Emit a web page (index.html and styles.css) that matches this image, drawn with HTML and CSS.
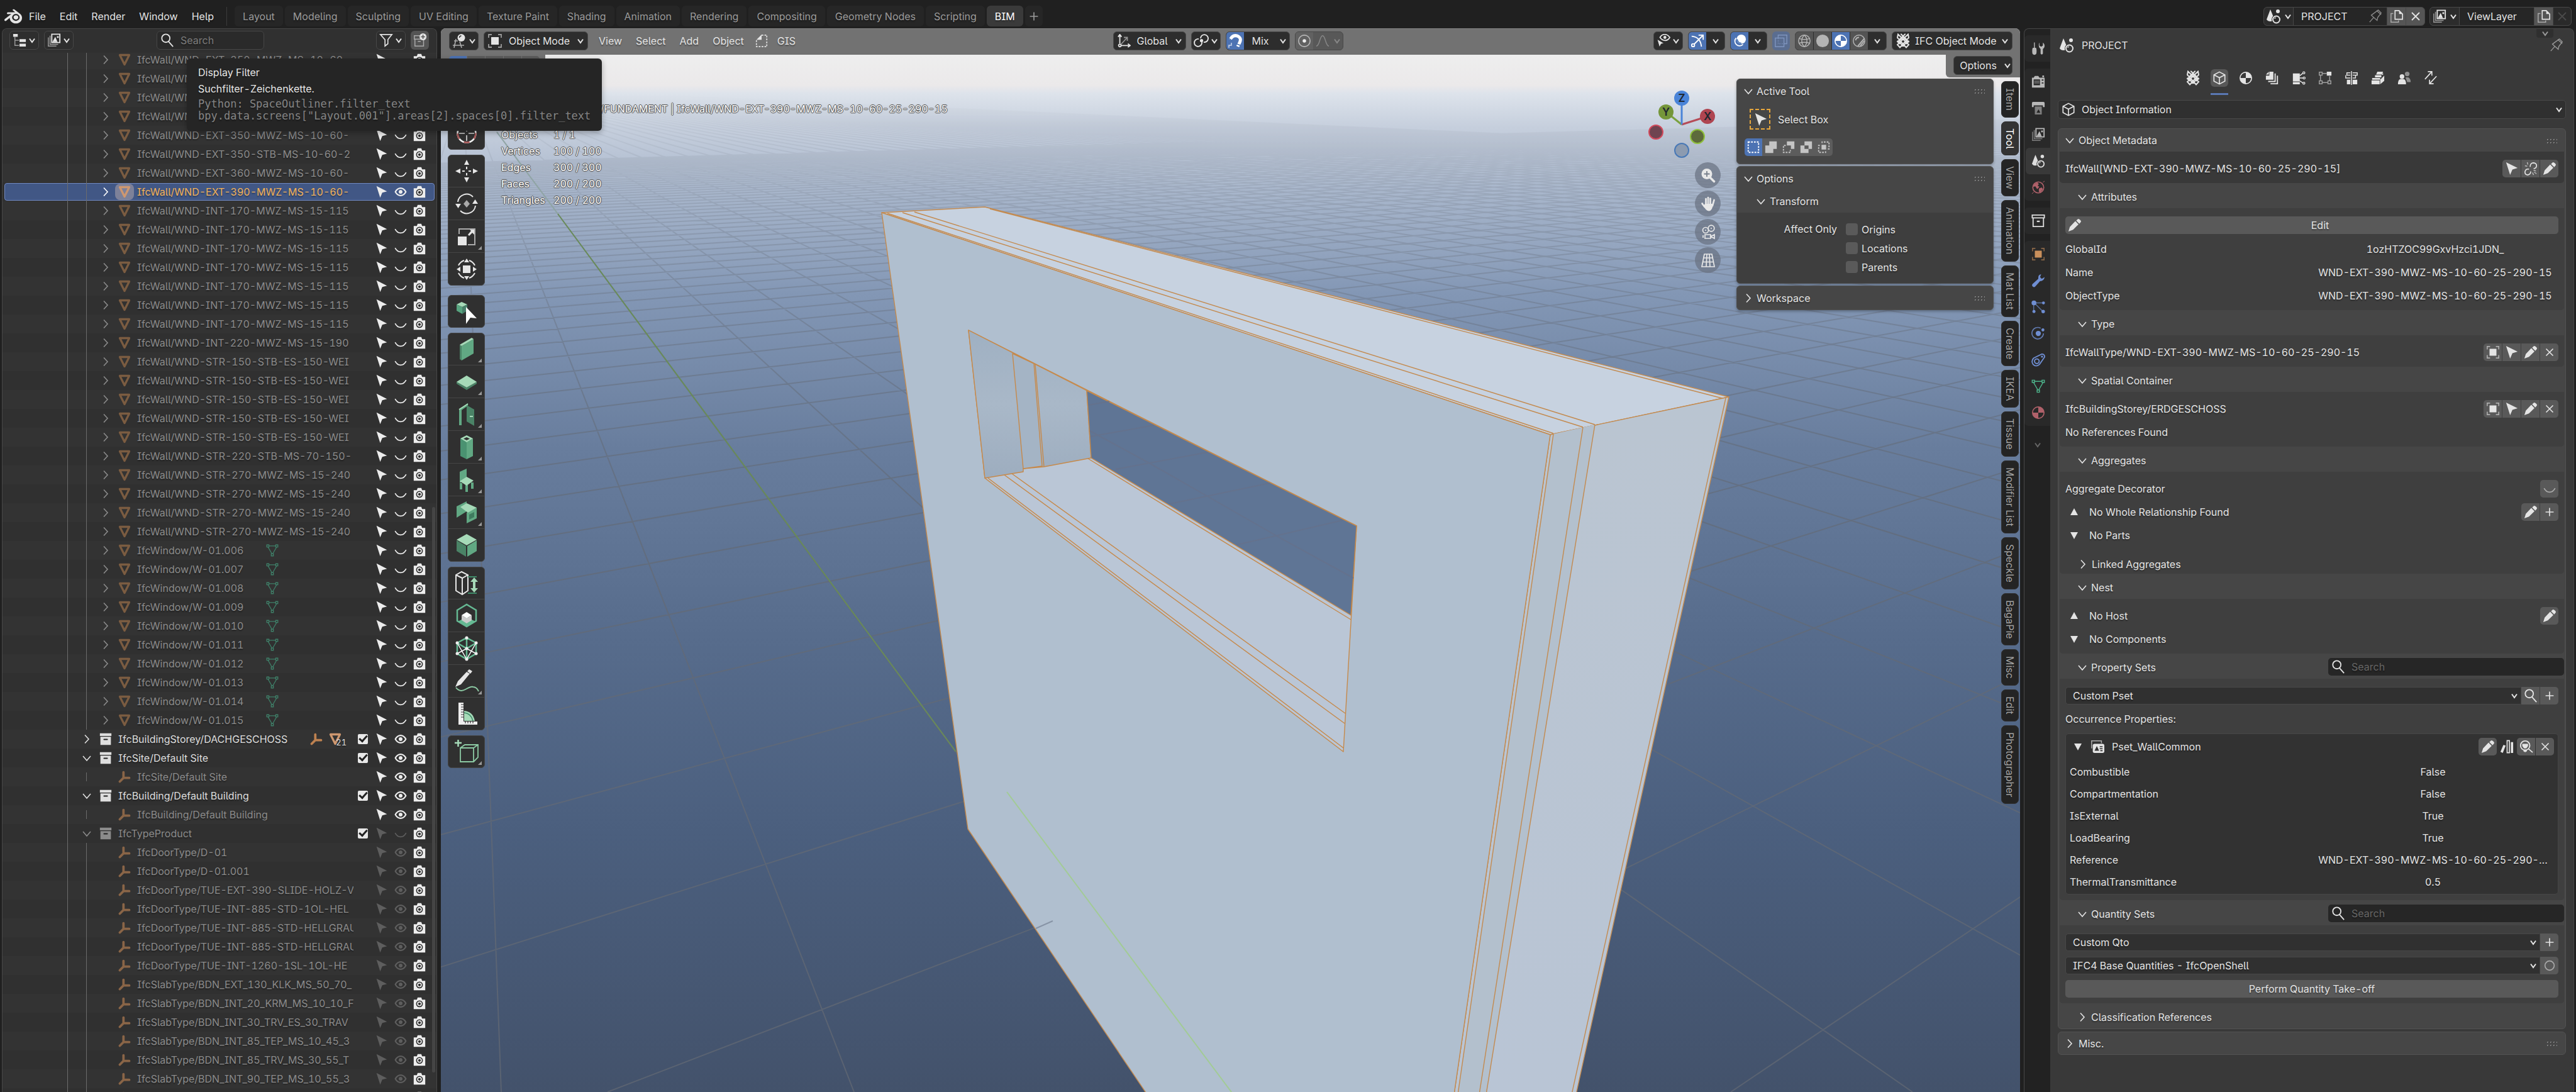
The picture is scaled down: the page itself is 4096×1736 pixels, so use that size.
FILE: index.html
```html
<!DOCTYPE html>
<html lang="en">
<head>
<meta charset="utf-8">
<title>PROJECT - Blender</title>
<link rel="stylesheet" href="styles.css">
</head>
<body>
<svg class="defs" aria-hidden="true">
  <defs>
    <symbol id="logo" viewBox="0 0 24 24"><path fill="currentColor" d="M12.51 13.214c.046-.8.438-1.506 1.03-2.006a3.424 3.424 0 0 1 2.212-.79c.85 0 1.631.3 2.211.79.592.5.983 1.206 1.028 2.005.045.823-.285 1.586-.865 2.153a3.389 3.389 0 0 1-2.374.938 3.393 3.393 0 0 1-2.376-.938c-.58-.567-.91-1.33-.865-2.152M7.35 14.831c.006.314.106.922.256 1.398a7.372 7.372 0 0 0 1.593 2.757 8.227 8.227 0 0 0 2.787 2.001 8.947 8.947 0 0 0 3.66.76 8.964 8.964 0 0 0 3.657-.772 8.285 8.285 0 0 0 2.785-2.01 7.428 7.428 0 0 0 1.592-2.762 6.964 6.964 0 0 0 .25-3.074 7.123 7.123 0 0 0-1.016-2.779 7.764 7.764 0 0 0-1.852-2.043h.002L13.566 2.55l-.02-.015c-.492-.378-1.319-.376-1.86.002-.547.382-.609 1.015-.123 1.415l-.001.001 3.126 2.543-9.53.01h-.013c-.788.001-1.545.518-1.695 1.172-.154.665.38 1.217 1.2 1.22V8.9l4.83-.01-8.62 6.617-.034.025c-.813.622-1.075 1.658-.563 2.313.52.667 1.625.668 2.447.004L7.414 14s-.069.52-.063.831zm12.09 1.741c-.97.988-2.326 1.548-3.795 1.55-1.47.004-2.827-.552-3.797-1.538a4.51 4.51 0 0 1-1.036-1.622 4.282 4.282 0 0 1 .282-3.519 4.702 4.702 0 0 1 1.153-1.371c.942-.768 2.141-1.183 3.396-1.185 1.256-.002 2.455.41 3.398 1.175.48.391.87.854 1.152 1.367a4.28 4.28 0 0 1 .522 1.706 4.236 4.236 0 0 1-.239 1.811 4.54 4.54 0 0 1-1.036 1.626z"/></symbol>
    <symbol id="chev" viewBox="0 0 12 12"><path class="ln" stroke-width="2" d="M2 3.5 6 9l4-5.5"/></symbol>
    <symbol id="down" viewBox="0 0 20 20"><path class="ln" stroke-width="1.6" d="M4 7l6 7 6-7"/></symbol>
    <symbol id="right" viewBox="0 0 20 20"><path class="ln" stroke-width="1.6" d="M7 3.5l6 6.5-6 6.5"/></symbol>
    <symbol id="triup" viewBox="0 0 20 20"><path fill="currentColor" d="M10 4l6 11H4z"/></symbol>
    <symbol id="tridn" viewBox="0 0 20 20"><path fill="currentColor" d="M10 16l6-11H4z"/></symbol>
    <symbol id="tree" viewBox="0 0 24 24"><path class="ln" opacity=".6" stroke-width="1.6" d="M4 6v15h7M4 12h7"/><path fill="currentColor" d="M1 1h8v5H1zM12 10h11v5H12zM12 18h11v5H12z"/></symbol>
    <symbol id="imgs" viewBox="0 0 24 24"><path class="ln" opacity=".6" stroke-width="1.6" d="M5 4v15h14M2 7v15h14"/><path class="ln" stroke-width="2" d="M8 1.5h14V16H8z"/><path fill="currentColor" d="M9 15l5-9 4 9zM17 5h3v3h-3z"/></symbol>
    <symbol id="search" viewBox="0 0 24 24"><circle class="ln" stroke-width="2" cx="9.5" cy="8.5" r="7"/><path class="ln" stroke-width="2" d="M14 14l8 9"/></symbol>
    <symbol id="funnel" viewBox="0 0 24 24"><path class="ln" stroke-width="1.8" d="M2 2h20l-7 9v7l-5 4V11z"/></symbol>
    <symbol id="newcol" viewBox="0 0 24 24"><path class="ln" opacity=".6" stroke-width="1.6" d="M12 4H2v6h17V12M3 10v12h15V10M8 14h5"/><circle cx="17" cy="6" r="6" fill="currentColor"/><path stroke="#555" stroke-width="1.8" d="M17 2.5v7M13.500 6h7"/></symbol>
    <symbol id="mesh" viewBox="0 0 24 24"><path fill="none" stroke="#7b5c41" stroke-width="4" stroke-linejoin="round" d="M3 3h18l-9 18z"/></symbol>
    <symbol id="meshon" viewBox="0 0 24 24"><path fill="none" stroke="#cf9870" stroke-width="4" stroke-linejoin="round" d="M3 3h18l-9 18z"/></symbol>
    <symbol id="meshdata" viewBox="0 0 24 24"><path class="ln" stroke-width="1.6" d="M5 3.500h14M4 6l7 12M20 6l-7 12M1.500 1.500h4v4h-4zM18.500 1.500h4v4h-4zM10 18.500h4v4h-4z"/></symbol>
    <symbol id="empty" viewBox="0 0 24 24"><path class="ln" stroke-width="4.500" stroke-linecap="round" d="M10 3v11l-7 7M10 14h11"/></symbol>
    <symbol id="coll" viewBox="0 0 24 24"><path fill="currentColor" d="M1 1h22v5H1zM2 7.500h20V23H2z"/><path stroke="#222" stroke-width="2.500" stroke-linecap="round" d="M9 12.500h6"/></symbol>
    <symbol id="collo" viewBox="0 0 24 24"><path class="ln" stroke-width="2" d="M1.500 2h21v5h-21zM3 7v15h18V7"/><path stroke="currentColor" stroke-width="2.500" d="M9.500 13h5"/></symbol>
    <symbol id="cursor" viewBox="0 0 24 24"><path fill="currentColor" d="M2 1l20 10-9 2.500-4 9.500z"/></symbol>
    <symbol id="eye" viewBox="0 0 24 24"><path class="ln" stroke-width="2.600" d="M2 12c5-9.500 15-9.500 20 0-5 9.500-15 9.500-20 0z"/><circle cx="12" cy="12" r="3.600" fill="currentColor"/></symbol>
    <symbol id="eyeoff" viewBox="0 0 24 24"><path class="ln" stroke-width="2" d="M1.500 11c5 10 16 10 21 0"/></symbol>
    <symbol id="cam" viewBox="0 0 24 24"><path fill="currentColor" d="M1 5h6l1.500-4h7L17 5h6v18H1z"/><circle cx="12" cy="13" r="5.500" fill="none" stroke="#2c2c2c" stroke-width="2"/><circle cx="12" cy="13" r="2.500" fill="#2c2c2c"/></symbol>
    <symbol id="ed3d" viewBox="0 0 24 24"><path class="ln" opacity=".7" stroke-width="1.600" d="M7 9L4 23M13 13l3 10M2 19h18M4 12h6"/><circle cx="15.500" cy="7" r="6" fill="currentColor"/><path stroke="#2c2c2c" fill="none" stroke-width="1.400" d="M12.500 7q0-3 3-3"/></symbol>
    <symbol id="obj" viewBox="0 0 24 24"><path fill="currentColor" d="M6 6h12v12H6z"/><path class="ln" opacity=".6" stroke-width="1.800" d="M2 7V2h5M17 2h5v5M22 17v5h-5M7 22H2v-5"/></symbol>
    <symbol id="gis" viewBox="0 0 24 24"><path fill="currentColor" d="M3 10l9-9v9z"/><path class="ln" stroke-width="1.800" stroke-dasharray="3 2" d="M12 2h9v20H3V11"/></symbol>
    <symbol id="axes" viewBox="0 0 24 24"><path class="ln" stroke-width="2" d="M5 17V2M2 5l3-4 3 4M7 20h15M19 17l4 3-4 3"/><circle class="ln" stroke-width="2" cx="5" cy="20" r="2.200"/><path class="ln" opacity=".55" stroke-width="2" d="M7 18L18 6M12 6h6v6"/></symbol>
    <symbol id="pivot" viewBox="0 0 24 24"><path class="ln" stroke-width="1.900" d="M11 8a6 6 0 1 1 5 6M13 14a6 6 0 1 1-5-5"/><circle cx="12.500" cy="11.500" r="2.600" fill="currentColor"/></symbol>
    <symbol id="magnet" viewBox="0 0 24 24"><path fill="none" stroke="currentColor" stroke-width="5" d="M4 10q4-8 11-6 8 3 4 11l-3 6"/><path class="ln" stroke-width="1.500" opacity=".7" d="M2 23v-4h4v-4"/><path stroke="#4772b3" stroke-width="1.500" d="M2 8l6 4M12 16l8 3"/></symbol>
    <symbol id="ring" viewBox="0 0 24 24"><circle class="ln" stroke-width="1.800" opacity=".6" cx="12" cy="12" r="10"/><circle cx="12" cy="12" r="3" fill="currentColor"/></symbol>
    <symbol id="ringo" viewBox="0 0 24 24"><circle class="ln" stroke-width="1.800" cx="12" cy="12" r="8"/></symbol>
    <symbol id="bell" viewBox="0 0 24 24"><path class="ln" stroke-width="1.600" d="M1 21c6 0 6-18 11-18s5 18 11 18"/></symbol>
    <symbol id="eyecur" viewBox="0 0 24 24"><path class="ln" stroke-width="2" d="M6 6c4-7 12-7 17 0-4 7-12 7-17 0z"/><circle cx="14.500" cy="6" r="2.600" fill="currentColor"/><path fill="currentColor" stroke="#2c2c2c" d="M1 9l12 7-5 1.500L5 23z"/></symbol>
    <symbol id="giz" viewBox="0 0 24 24"><path class="ln" stroke-width="2" d="M2 4q15 1 17 18M6 18L21 3M14 2h8v8"/><circle class="ln" stroke-width="2" cx="4.500" cy="19.500" r="2.500"/></symbol>
    <symbol id="over" viewBox="0 0 24 24"><circle cx="15" cy="9" r="8" fill="currentColor"/><path class="ln" stroke-width="1.800" d="M6 7a8 8 0 1 0 12 11"/><path fill="none" stroke="#4772b3" stroke-width="1.800" d="M8 9a7 7 0 0 0 7 7"/></symbol>
    <symbol id="xray" viewBox="0 0 24 24"><path class="ln" stroke-width="1.600" d="M2 7h15v15H2zM7 7V2h15v15h-5"/><path class="ln" stroke-dasharray="2 2" d="M7 7v10h10V7z"/></symbol>
    <symbol id="wire" viewBox="0 0 24 24"><circle class="ln" stroke-width="1.600" cx="12" cy="12" r="10"/><path class="ln" stroke-width="1.600" d="M12 2c-6 6-6 14 0 20M12 2c6 6 6 14 0 20M3 8q9 3 18 0M3 16q9-3 18 0"/></symbol>
    <symbol id="solid" viewBox="0 0 24 24"><circle cx="12" cy="12" r="11" fill="currentColor"/></symbol>
    <symbol id="mat" viewBox="0 0 24 24"><circle class="ln" stroke-width="1.800" cx="12" cy="12" r="10"/><path fill="currentColor" d="M12 2v10H2A10 10 0 0 1 12 2zM12 12h10a10 10 0 0 1-10 10z"/></symbol>
    <symbol id="matr" viewBox="0 0 24 24"><circle class="ln" stroke-width="1.800" cx="12" cy="12" r="10"/><path fill="currentColor" d="M12 2v10h10A10 10 0 0 0 12 2zM12 12H2a10 10 0 0 0 10 10z"/></symbol>
    <symbol id="rend" viewBox="0 0 24 24"><circle class="ln" stroke-width="1.600" cx="12" cy="12" r="10"/><path class="ln" stroke-width="2.200" d="M6 11q1-5 6-5M14 21l7-9M10 21L21 8"/></symbol>
    <symbol id="knot" viewBox="0 0 24 24"><path class="ln" stroke-width="2" d="M4 1.500L21 18l-4 4.500h0L3 7zM20 1.500L3 18l4 4.500L21 7zM8 1.500h1L21 13l-4 4M16 1.500h-1L3 13l4 4M12 6l7 7-7 7-7-7z"/></symbol>
    <symbol id="zoomi" viewBox="0 0 24 24"><circle cx="10" cy="9.500" r="8.500" fill="currentColor"/><path stroke="currentColor" stroke-width="3.500" stroke-linecap="round" d="M15.500 15.500l6 6"/><path stroke="#777f8b" stroke-width="1.800" d="M10 5v9M5.500 9.500h9"/></symbol>
    <symbol id="hand" viewBox="0 0 24 24"><path fill="none" stroke="currentColor" stroke-width="2.700" stroke-linecap="round" d="M8.500 14V4M12 13V2M15.500 14V3.500M19 15l2.500-9M6.500 17L2.500 11.500"/><path fill="currentColor" d="M7 12h12.500q0 11-6.500 11.500Q8 23 5 15z"/></symbol>
    <symbol id="camv" viewBox="0 0 24 24"><circle class="ln" stroke-width="1.700" cx="8" cy="9" r="4.500"/><circle class="ln" stroke-width="1.700" cx="17" cy="6" r="4.800"/><circle cx="8" cy="9" r="1" fill="currentColor"/><circle cx="17" cy="6" r="1" fill="currentColor"/><path class="ln" stroke-width="1.700" d="M7 16h9v6H7zM16 19l6-3v6zM4 17v4"/></symbol>
    <symbol id="persp" viewBox="0 0 24 24"><path class="ln" stroke-width="1.700" d="M6 2h12l4 20H2zM5 8h14M3.500 14.500h17M10 2l-1 20M14 2l1 20"/></symbol>
    <symbol id="s1" viewBox="0 0 24 24"><path class="ln" stroke-width="2" stroke-dasharray="3 2" d="M3 3h18v18H3z"/></symbol>
    <symbol id="s2" viewBox="0 0 24 24"><path fill="currentColor" d="M9 2h13v13h-6v7H2V9h7z"/></symbol>
    <symbol id="s3" viewBox="0 0 24 24"><path fill="currentColor" d="M9 2h13v13h-6V9H9z"/><path class="ln" stroke-width="2" stroke-dasharray="3 2" d="M7 9H3v12h12v-4"/></symbol>
    <symbol id="s4" viewBox="0 0 24 24"><path fill="currentColor" fill-rule="evenodd" d="M9 2h13v13h-6v7H2V9h7zM9 9v6h7V9z"/></symbol>
    <symbol id="s5" viewBox="0 0 24 24"><path fill="currentColor" d="M8 8h8v8H8z"/><path class="ln" stroke-width="2" stroke-dasharray="3 2" d="M9 5V3h12v12h-3M5 9H3v12h12v-3"/></symbol>
    <symbol id="tool" viewBox="0 0 24 24"><path fill="currentColor" d="M4.500 1.500h1.500V11h2q1 2 1 4v3a3.700 5 0 0 1-7.500 0v-3q0-2 1-4h2z"/><path fill="currentColor" d="M14 2v5l3 2 3-2V2q4 3 2.500 8L20 13v8q-2 3-4 0v-8l-2.500-3Q12 5 14 2z"/></symbol>
    <symbol id="render" viewBox="0 0 24 24"><path fill="currentColor" fill-rule="evenodd" d="M1 5h3l2-3h6l2 3h9v17H1zM4 8v10h11V8zM18 8v2h3V8zM18 13v2h3v-2z"/><path stroke="currentColor" d="M5 11h9M5 14h9"/><path fill="currentColor" d="M19 1h3v3h-3z"/></symbol>
    <symbol id="output" viewBox="0 0 24 24"><path fill="currentColor" d="M1 3q0-2 2-2h18q2 0 2 2v7h-3V7H4v3H1z"/><path fill="currentColor" opacity=".6" d="M6 9h12v14H6z"/><path fill="#222" d="M9 20l3.500-6 3 6z"/></symbol>
    <symbol id="scene" viewBox="0 0 24 24"><path fill="currentColor" d="M7 1l5 12v5q-2 2-5 2-4 0-6-3z"/><circle cx="19" cy="4" r="3" fill="currentColor"/><circle cx="16.500" cy="17" r="7.500" fill="var(--hole,#303030)"/><circle class="ln" stroke-width="2" cx="16.500" cy="17" r="5.500"/><path class="ln" stroke-width="1.200" d="M14 16q0-2 2-2"/></symbol>
    <symbol id="world" viewBox="0 0 24 24"><circle class="ln" stroke-width="1.800" cx="12" cy="12" r="9.500"/><path fill="currentColor" d="M4 7l6-4 3 3-2 3 3 2-4 4-3-5-4 1zM13 14l5-2 2 3-4 5h-3z"/><path class="ln" d="M20 3l3-2M1 23l3-3"/></symbol>
    <symbol id="wrench" viewBox="0 0 24 24"><path fill="currentColor" d="M17 1q-6 1-5 8L2 18q-2 3 1 5 2 1 4-1l8-9q7 0 8-7l-5 3-3-3z"/></symbol>
    <symbol id="parts" viewBox="0 0 24 24"><path stroke="currentColor" opacity=".7" stroke-width="1.600" d="M4 5v14M4 5h15M5 5l15 15"/><circle cx="4.500" cy="5" r="4.200" fill="currentColor"/><circle cx="21" cy="5" r="2.500" fill="currentColor"/><circle cx="4.500" cy="20" r="2.700" fill="currentColor"/><circle cx="20.500" cy="20" r="3" fill="currentColor"/></symbol>
    <symbol id="phys" viewBox="0 0 24 24"><path class="ln" opacity=".8" stroke-width="1.800" d="M16 3A10 10 0 1 0 21 12"/><circle cx="12" cy="12" r="4.500" fill="currentColor"/><circle cx="20" cy="6" r="2.600" fill="currentColor"/></symbol>
    <symbol id="cons" viewBox="0 0 24 24"><path class="ln" stroke-width="2" d="M4 9L18 2q5 0 5 5L14 20q-6 5-11 0-4-6 1-11z"/><circle class="ln" stroke-width="2" cx="9.500" cy="14.500" r="4"/><circle cx="18.500" cy="6.500" r="1.800" fill="currentColor"/></symbol>
    <symbol id="cube" viewBox="0 0 24 24"><path class="ln" stroke-width="1.800" d="M12 1.500l9.500 5v11l-9.500 5-9.500-5v-11zM2.500 6.500l9.500 5 9.500-5M12 11.500v11"/></symbol>
    <symbol id="docs" viewBox="0 0 24 24"><path fill="currentColor" d="M7 1h7v14H1V8h6zM1 6l5-5v5z"/><path class="ln" stroke-width="2" d="M17 4v14H5M21 8v14H9"/></symbol>
    <symbol id="db" viewBox="0 0 24 24"><path fill="currentColor" d="M2 4h12v14H2zM2 19h12v4H2z"/><path class="ln" stroke-width="1.600" d="M14 8l5-4M14 12h6M14 17l6 4"/><circle class="ln" stroke-width="1.500" cx="21" cy="3" r="1.800"/><circle class="ln" stroke-width="1.500" cx="21.500" cy="12" r="1.800"/><circle class="ln" stroke-width="1.500" cx="21" cy="21" r="1.800"/></symbol>
    <symbol id="nodes" viewBox="0 0 24 24"><path class="ln" opacity=".6" stroke-width="1.600" d="M7 4h8M4 7v10M20 9v8M7 20h10M2 2h5v5H2zM2 17h5v5H2zM17 17h5v5h-5z"/><path fill="currentColor" d="M15 1h8v7h-8z"/></symbol>
    <symbol id="align" viewBox="0 0 24 24"><path class="ln" stroke-width="1.600" d="M12 0v24M10 3H4v4h6M10 12H2V7M14 3h8v4h-8M14 12h5V7"/><path fill="currentColor" d="M4 15h6v8H4zM14 15h8v8h-8z"/></symbol>
    <symbol id="boxes" viewBox="0 0 24 24"><path fill="currentColor" d="M11 1h10l-2 5H9zM7 7h11v4H7zM2 12h14v3H2zM1 16h14v7H1zM16 15l7-7v9l-7 6zM19 6l2-3v4z"/></symbol>
    <symbol id="people" viewBox="0 0 24 24"><g fill="currentColor"><g opacity=".5"><circle cx="17" cy="5" r="4"/><path d="M14 11h5q4 2 4 8h-6z"/></g><circle cx="8" cy="9.500" r="4"/><path d="M1 23q0-8 4-9h6q4 1 4 9z"/></g></symbol>
    <symbol id="arrows" viewBox="0 0 24 24"><path class="ln" stroke-width="1.800" d="M2 14L13 2M7 1h7v7M22 9L10 22M10 15v7h7"/></symbol>
    <symbol id="pin" viewBox="0 0 24 24"><path class="ln" stroke-width="1.500" d="M2 22l7-8M5 10l10 9 1-5 6-8-5-5-8 6zM14 2l8 7"/></symbol>
    <symbol id="copy" viewBox="0 0 24 24"><path class="ln" stroke-width="1.800" d="M9 2h7l6 6v9H9z"/><path fill="currentColor" d="M16 2l6 6h-6z"/><path class="ln" opacity=".6" stroke-width="1.600" d="M6 7H2v15h13v-3"/></symbol>
    <symbol id="x" viewBox="0 0 24 24"><path class="ln" stroke-width="1.800" d="M6 6l12 12M18 6L6 18"/></symbol>
    <symbol id="plus" viewBox="0 0 24 24"><path class="ln" stroke-width="1.800" d="M12 5v14M5 12h14"/></symbol>
    <symbol id="pencil" viewBox="0 0 24 24"><path fill="currentColor" d="M1 23l2.500-8L13 5l5.500 5.500L9 20zM14.500 4l2.500-2.500q2-1 4.500 1.500t.5 4L20 9.500z"/></symbol>
    <symbol id="unlink" viewBox="0 0 24 24"><path class="ln" stroke-width="1.800" d="M11 9q0-7 6-7 6 1 5 6-1 4-5 4M9 13q-6-1-7 5 0 5 5 5 5-1 5-6"/><path class="ln" stroke-width="1.600" opacity=".7" d="M2 7l4 1M6 1l1 4M17 15l4 1M15 19l2 4M18 18l4 3"/></symbol>
    <symbol id="pset" viewBox="0 0 24 24"><path class="ln" opacity=".7" stroke-width="1.600" d="M2 15V2h17v4"/><rect x="4" y="7" width="20" height="16" rx="3" fill="currentColor"/><path fill="#303030" d="M7 19l4-8 4 8z"/><path stroke="#303030" stroke-width="1.800" d="M16 12h5M16 15.500h5M17 19h4"/></symbol>
    <symbol id="books" viewBox="0 0 24 24"><path fill="currentColor" d="M6 9l4 1-5 13-4-2zM19 4h4v19h-4z"/><path class="ln" stroke-width="1.800" d="M12.500 1.500h4v21h-4z"/></symbol>
    <symbol id="lamp" viewBox="0 0 24 24"><circle class="ln" stroke-width="2" cx="10" cy="10" r="8"/><path class="ln" stroke-width="2" d="M16 16l7 6"/><path fill="currentColor" d="M5 7h10v4l-3 4H8l-3-4zM7 18h6v2q-3 3-6 0z"/></symbol>

    <symbol id="t-cur" viewBox="0 0 40 40"><circle cx="20" cy="20" r="14.500" fill="none" stroke="#eee" stroke-width="2.500"/><circle cx="20" cy="20" r="14.500" fill="none" stroke="#a55" stroke-width="2.500" stroke-dasharray="9 9"/><path stroke="#ddd" stroke-width="1.600" d="M20 8v9M20 23v9M8 20h9M23 20h9"/></symbol>
    <symbol id="t-move" viewBox="0 0 40 40"><path fill="currentColor" d="M20 2l4 8h-8zM20 38l4-8h-8zM2 20l8-4v8zM38 20l-8-4v8zM19 13h2v4h-2zM19 23h2v4h-2zM13 19h4v2h-4zM23 19h4v2h-4z"/></symbol>
    <symbol id="t-rot" viewBox="0 0 40 40"><path fill="none" stroke="currentColor" stroke-width="2" d="M6 17A14 14 0 0 1 30 9M34 23a14 14 0 0 1-24 8"/><path fill="currentColor" d="M2 20h9l-4.500 7zM38 20h-9l4.500-7z"/><path fill="#aaa" d="M20 14l5 6-5 6-5-6z"/></symbol>
    <symbol id="t-scale" viewBox="0 0 40 40"><path fill="none" stroke="#aaa" stroke-width="2" d="M8 16V8h25v25H22"/><path fill="currentColor" d="M6 20h14v14H6zM22 17l5-6-2-2h7v8l-3-3-5 5z"/></symbol>
    <symbol id="t-trans" viewBox="0 0 40 40"><path fill="none" stroke="currentColor" stroke-width="2" d="M7 14q3-6 9-8M24 6q6 2 9 8M7 26q3 6 9 8M24 34q6-2 9-8"/><path fill="currentColor" d="M14 14h12v12H14zM20 3l4 6h-8zM20 37l4-6h-8zM4 20l6-4v8zM36 20l-6-4v8z"/></symbol>
    <symbol id="t-sel" viewBox="0 0 40 40"><path fill="#a6dab8" d="M4 9l8-4 9 4-8 4z"/><path fill="#57a47f" d="M4 9l9 4v11l-9-5z"/><path fill="#48806a" d="M13 13l8-4v10l-8 5z"/><path fill="#fff" d="M19 13l17 18-10-1-7 10z"/></symbol>
    <symbol id="t-wall" viewBox="0 0 40 40"><path fill="#61a883" d="M12 15l19-11v23L12 38z"/><path fill="#4a8366" d="M9 13l3 2v23l-3-2z"/><path fill="#a6dab8" d="M9 13L28 2l3 2-19 11z"/></symbol>
    <symbol id="t-slab" viewBox="0 0 40 40"><path fill="#4a8366" d="M4 20l16 9v4L4 23zM36 20l-16 9v4l16-10z"/><path fill="#a6dab8" d="M20 10l16 10-16 9L4 20z"/></symbol>
    <symbol id="t-door" viewBox="0 0 40 40"><path fill="#61a883" d="M8 12l14-10v4L12 13v24H8z"/><path fill="#4a8366" d="M20 5l12 7v26l-12-7z"/><path stroke="#a6dab8" stroke-width="2" d="M8 12L22 3M25 23h5"/></symbol>
    <symbol id="t-col" viewBox="0 0 40 40"><path fill="#4a9271" d="M10 6l10 5v28l-10-5z"/><path fill="#61a883" d="M30 6l-10 5v28l10-5z"/><path fill="#a6dab8" fill-rule="evenodd" d="M20 1l10 5-10 6-10-6zM20 4l-5 2.500 5 2.500 5-2.500z"/></symbol>
    <symbol id="t-chair" viewBox="0 0 40 40"><path fill="#61a883" d="M9 7l11-5v16l-11 7zM9 25h4v10H9zM18 28h4v11h-4zM27 24h4v10h-4z"/><path fill="#a6dab8" d="M9 22l11-7 11 6-11 8z"/></symbol>
    <symbol id="t-duct" viewBox="0 0 40 40"><path fill="#61a883" d="M4 10L20 2v16L4 28zM20 20l16-8v17l-16 8z"/><path fill="#a6dab8" d="M10 11l10-6 16 7-14 8z"/><path fill="#3f7b5f" d="M24 23l8-4v8l-8 4z"/></symbol>
    <symbol id="t-cube" viewBox="0 0 40 40"><path fill="#a6dab8" d="M20 2l16 9-16 9L4 11z"/><path fill="#4a8366" d="M4 12l15 9v17L4 29z"/><path fill="#61a883" d="M36 12l-15 9v17l15-9z"/></symbol>
    <symbol id="t-ext" viewBox="0 0 40 40"><path fill="none" stroke="#e6e6e6" stroke-width="2" d="M3 7l9-5 10 5v25l-9 6-10-6zM3 7l10 5 9-5M13 12v26"/><path stroke="#3f8a68" stroke-width="2" d="M22 10h14M22 36h14"/><path fill="#a6dab8" d="M32 11l6 7h-4v10h4l-6 7-6-7h4V18h-4z"/></symbol>
    <symbol id="t-space" viewBox="0 0 40 40"><path fill="none" stroke="#65b993" stroke-width="2.500" d="M5 11l15-9 15 9v17l-15 9-15-9z"/><path fill="#65b993" d="M6 29l14-7 14 7-14 8z"/><path fill="#fff" d="M12 19l8-5 8 5-8 5z"/><path fill="#ccc" d="M12 19l8 5v8l-8-5zM28 19l-8 5v8l8-5z"/></symbol>
    <symbol id="t-str" viewBox="0 0 40 40"><path fill="none" stroke="#65b993" stroke-width="2.500" d="M20 3v34M5 11l15-8 15 8v17l-15 9-15-9zM5 11l15 9 15-9"/><path fill="none" stroke="#fff" stroke-width="1.500" d="M5 11l15 26 15-26M5 28l15-8 15 8"/><g fill="#eee"><circle cx="20" cy="3" r="2.500"/><circle cx="5" cy="11" r="2.500"/><circle cx="35" cy="11" r="2.500"/><circle cx="20" cy="20" r="2.500"/><circle cx="5" cy="28" r="2.500"/><circle cx="35" cy="28" r="2.500"/><circle cx="20" cy="37" r="2.500"/></g></symbol>
    <symbol id="t-ann" viewBox="0 0 40 40"><path fill="none" stroke="#8cc9a3" stroke-width="2" d="M3 30q6 8 15 3t12-4q6 0 9 7"/><path fill="#e6e6e6" d="M2 29L6 20 20 5l5 3L11 25zM21 4l3-3 5 3-3 4z"/></symbol>
    <symbol id="t-meas" viewBox="0 0 40 40"><path fill="#eee" d="M7 2h8v30h22v5H7z"/><path fill="#a6dab8" d="M16 15q14 1 17 16H16z"/><path fill="none" stroke="#3f8a68" stroke-width="1.500" d="M16 18q11 1 14 13"/><path stroke="#333" stroke-width="1.200" d="M15 5h-4M15 9h-4M15 13h-4M15 17h-4M15 21h-4M15 25h-4M18 35v-3M22 35v-3M26 35v-3M30 35v-3"/></symbol>
    <symbol id="t-add" viewBox="0 0 40 40"><path fill="none" stroke="#8cc9a3" stroke-width="1.800" d="M10 14l7-5h21v20l-7 7H10zM10 14h21v22M31 14l7-5"/><path stroke="#a6dab8" stroke-width="2.500" d="M1 6h11M6.500 1v11"/></symbol>
  </defs>
</svg>

<header class="topbar">
  <a class="logo" href="#" aria-label="Blender"><svg><use href="#logo"/></svg></a>
  <nav class="menus"><button>File</button><button>Edit</button><button>Render</button><button>Window</button><button>Help</button></nav>
  <span class="sep"></span>
  <nav class="wtabs">
    <button>Layout</button><button>Modeling</button><button>Sculpting</button><button>UV Editing</button><button>Texture Paint</button><button>Shading</button><button>Animation</button><button>Rendering</button><button>Compositing</button><button>Geometry Nodes</button><button>Scripting</button><button class="on">BIM</button><button class="add" aria-label="Add workspace"><svg class="i22"><use href="#plus"/></svg></button>
  </nav>
  <div class="idgroup">
    <div class="idb"><button class="drop" aria-label="Browse scene"><svg class="i24"><use href="#scene"/></svg><svg class="i12"><use href="#chev"/></svg></button><input class="scn" value="PROJECT" aria-label="Scene name"><button class="pinb" aria-label="Pin"><svg class="i22"><use href="#pin"/></svg></button><button class="lt" aria-label="New scene"><svg class="i22"><use href="#copy"/></svg></button><button class="lt" aria-label="Delete scene"><svg class="i24"><use href="#x"/></svg></button></div>
    <div class="idb"><button class="drop" aria-label="Browse view layer"><svg class="i22"><use href="#imgs"/></svg><svg class="i12"><use href="#chev"/></svg></button><input class="vly" value="ViewLayer" aria-label="View layer name"><button class="lt" aria-label="New view layer"><svg class="i22"><use href="#copy"/></svg></button><button class="off" aria-label="Delete view layer" disabled><svg class="i24"><use href="#x"/></svg></button></div>
  </div>
</header>

<main class="areas">
  <section class="outliner">
    <div class="ohead">
      <button class="drop" aria-label="Editor type"><svg class="i22"><use href="#tree"/></svg><svg class="i12"><use href="#chev"/></svg></button>
      <button class="drop" aria-label="Display mode"><svg class="i22"><use href="#imgs"/></svg><svg class="i12"><use href="#chev"/></svg></button>
      <label class="osearch"><svg class="i22"><use href="#search"/></svg><input placeholder="Search" aria-label="Display filter"></label>
      <button class="drop" aria-label="Filter"><svg class="i22"><use href="#funnel"/></svg><svg class="i12"><use href="#chev"/></svg></button>
      <button class="newc" aria-label="New collection"><svg class="i22"><use href="#newcol"/></svg></button>
    </div>
    <ul class="rows" id="rows"></ul>
    <span class="scroll"></span>
  </section>

  <section class="viewport">
    <svg class="scene" viewBox="701 45 2511 1691" preserveAspectRatio="xMidYMid slice" aria-hidden="true">
      <defs>
        <linearGradient id="sky" gradientUnits="userSpaceOnUse" x1="0" y1="86" x2="0" y2="1736">
          <stop offset="0" stop-color="#eeeeee"/><stop offset=".03" stop-color="#ebe9ea"/><stop offset=".038" stop-color="#dde3eb"/>
          <stop offset=".07" stop-color="#c6cfdd"/><stop offset=".13" stop-color="#a9b7cc"/><stop offset=".23" stop-color="#8397b5"/>
          <stop offset=".38" stop-color="#687d9d"/><stop offset=".56" stop-color="#576c8c"/><stop offset=".75" stop-color="#4b5f7e"/><stop offset="1" stop-color="#43526b"/>
        </linearGradient>
        <linearGradient id="fade" gradientUnits="userSpaceOnUse" x1="0" y1="150" x2="0" y2="900"><stop offset="0" stop-color="#fff" stop-opacity="0"/><stop offset=".12" stop-color="#fff" stop-opacity=".1"/><stop offset=".3" stop-color="#fff" stop-opacity=".25"/><stop offset="1" stop-color="#fff" stop-opacity=".7"/></linearGradient>
        <mask id="m" maskUnits="userSpaceOnUse" x="701" y="137" width="2511" height="1600"><rect x="701" y="137" width="2511" height="1600" fill="url(#fade)"/></mask>
        <linearGradient id="jamb" x1="0" y1="0" x2="0" y2="1"><stop offset="0" stop-color="#9fb0c2"/><stop offset=".5" stop-color="#a9b8c8"/><stop offset="1" stop-color="#9dadbf"/></linearGradient>
        <linearGradient id="sidef" x1="0" y1="0" x2="0" y2="1"><stop offset="0" stop-color="#bac5d1"/><stop offset="1" stop-color="#b9c5d5"/></linearGradient>
      </defs>
      <rect x="701" y="45" width="2511" height="1691" fill="url(#sky)"/>
      <g id="floor" mask="url(#m)" fill="none" stroke="#646a74" stroke-width="2"></g>
      <path d="M790 210L887 340" fill="none" stroke="#8fa5a4" stroke-width="2"/>
      <path d="M887 340L1520 1195" fill="none" stroke="#698b58" stroke-width="2"/>
      <g stroke="#c38a4f" stroke-width="1.400" stroke-linejoin="round">
        <path fill="#c7d2e0" d="M1402 338L1566 329 2749 631 2465 691z"/>
        <path fill="url(#sidef)" d="M2465 691L2749 631 2506 1740H2312z"/>
        <path fill="#b3c0cd" stroke="none" d="M2470 690L2536 675 2363 1740H2318z"/>
        <path fill="#b0bfcf" d="M1402 338L2465 691 2312 1740H1824L1539 1318z"/>
        <path fill="none" d="M1411 339L2470 689M1435 338L2517 679M1454 337L2536 675M1574 332L2738 633M2470 690L2318 1740M2517 679L2352 1740M2536 675L2363 1740M2744 633L2499 1740"/>
      </g>
      <g stroke="#c6894a" stroke-width="1.400" stroke-linejoin="round">
        <path fill="#bac6d6" d="M1540 525L2157 836 2136 1195 1566 760z"/>
        <path fill="url(#jamb)" d="M1540 525L1728 621 1735 728 1660 742 1627 745V750L1566 760z"/>
        <path fill="#a4b4c5" d="M1610 562L1644 578 1657 741 1627 745z"/>
        <path fill="#5f7595" d="M1728 621L2157 836 2148 978 1735 728z"/>
        <path fill="none" d="M1646 579L1660 742M1571 760L2136 1189M1597 755L2138 1150M1609 753L2139 1134M1730 729L2148 985"/>
      </g>
      <path fill="none" stroke="#66708a" stroke-width="2" opacity=".7" d="M1731 644L1764 638M1734 694L1835 676M1774 746L1920 719M1860 801L2019 768M1967 866L2135 827M1733 685L1827 736 1920 789 2030 852 2152 919"/>
      <path fill="none" stroke="#a2cb95" stroke-width="2" d="M1601 1259L1961 1740"/>
      <path fill="none" stroke="#8794a6" stroke-width="2" d="M1647 1476L1674 1464"/>
    </svg>

    <div class="vhead">
      <div class="cl">
        <button class="drop dk" aria-label="Editor type"><svg class="i24"><use href="#ed3d"/></svg><svg class="i12"><use href="#chev"/></svg></button>
        <span class="dd dk"><svg class="i24"><use href="#obj"/></svg><select aria-label="Mode"><option>Object Mode</option></select><svg class="i12"><use href="#chev"/></svg></span>
        <nav class="menus"><button>View</button><button>Select</button><button>Add</button><button>Object</button><button class="gis"><svg class="i22"><use href="#gis"/></svg>GIS</button></nav>
      </div>
      <div class="cl">
        <span class="dd dk"><svg class="i22"><use href="#axes"/></svg><select aria-label="Orientation"><option>Global</option></select><svg class="i12"><use href="#chev"/></svg></span>
        <button class="drop dk" aria-label="Pivot point"><svg class="i24"><use href="#pivot"/></svg><svg class="i12"><use href="#chev"/></svg></button>
        <span class="join dk"><button class="on" aria-label="Snap"><svg class="i24"><use href="#magnet"/></svg></button><span class="dd"><select aria-label="Snap to"><option>Mix</option></select><svg class="i12"><use href="#chev"/></svg></span></span>
        <span class="join dk dim"><button class="gr" aria-label="Proportional editing"><svg class="i22"><use href="#ring"/></svg></button><button class="wide" aria-label="Falloff"><svg class="i22"><use href="#bell"/></svg><svg class="i12"><use href="#chev"/></svg></button></span>
      </div>
      <div class="cl">
        <button class="drop dk" aria-label="Visibility"><svg class="i22"><use href="#eyecur"/></svg><svg class="i12"><use href="#chev"/></svg></button>
        <span class="join dk"><button class="on" aria-label="Gizmos"><svg class="i22"><use href="#giz"/></svg></button><button aria-label="Gizmo options"><svg class="i12"><use href="#chev"/></svg></button></span>
        <span class="join dk"><button class="on" aria-label="Overlays"><svg class="i22"><use href="#over"/></svg></button><button aria-label="Overlay options"><svg class="i12"><use href="#chev"/></svg></button></span>
        <span class="join xr"><button aria-label="X-ray"><svg class="i22"><use href="#xray"/></svg></button></span>
        <span class="join dk shade"><button class="gr" aria-label="Wireframe"><svg class="i22"><use href="#wire"/></svg></button><button class="gr" aria-label="Solid"><svg class="i22"><use href="#solid"/></svg></button><button class="on" aria-label="Material preview"><svg class="i22"><use href="#mat"/></svg></button><button class="gr" aria-label="Rendered"><svg class="i22"><use href="#rend"/></svg></button><button aria-label="Shading options"><svg class="i12"><use href="#chev"/></svg></button></span>
        <span class="dd dk snug"><svg class="i24"><use href="#knot"/></svg><select aria-label="IFC mode"><option>IFC Object Mode</option></select><svg class="i12"><use href="#chev"/></svg></span>
      </div>
    </div>
    <div class="vsub">
      <div class="vleft"><span class="modes"><button class="on" aria-label="Set"></button><button aria-label="Extend"></button><button aria-label="Subtract"></button><button aria-label="Invert"></button><button aria-label="Intersect"></button></span></div>
      <div class="vright"><button class="dd dk opt">Options<svg class="i12"><use href="#chev"/></svg></button></div>
    </div>

    <div class="vbody">
      <div class="tools">
        <div class="tg"><button aria-label="Select box"></button><button aria-label="Cursor"><svg><use href="#t-cur"/></svg></button></div>
        <div class="tg last"><button aria-label="Move"><svg><use href="#t-move"/></svg></button><button aria-label="Rotate"><svg><use href="#t-rot"/></svg></button><button class="more" aria-label="Scale"><svg><use href="#t-scale"/></svg></button><button aria-label="Transform"><svg><use href="#t-trans"/></svg></button></div>
        <div class="tg"><button aria-label="Explore"><svg><use href="#t-sel"/></svg></button></div>
        <div class="tg"><button class="more" aria-label="Wall"><svg><use href="#t-wall"/></svg></button><button class="more" aria-label="Slab"><svg><use href="#t-slab"/></svg></button><button class="more" aria-label="Door"><svg><use href="#t-door"/></svg></button><button class="more" aria-label="Column"><svg><use href="#t-col"/></svg></button><button class="more" aria-label="Furniture"><svg><use href="#t-chair"/></svg></button><button class="more" aria-label="Duct"><svg><use href="#t-duct"/></svg></button><button aria-label="Generic"><svg><use href="#t-cube"/></svg></button></div>
        <div class="tg"><button aria-label="Annotation"><svg><use href="#t-ext"/></svg></button><button aria-label="Spatial"><svg><use href="#t-space"/></svg></button><button aria-label="Structural"><svg><use href="#t-str"/></svg></button><button class="more" aria-label="Annotate"><svg><use href="#t-ann"/></svg></button><button aria-label="Measure"><svg><use href="#t-meas"/></svg></button></div>
        <div class="tg"><button class="more" aria-label="Add cube"><svg><use href="#t-add"/></svg></button></div>
      </div>
      <div class="stats">
        <p>(1) IfcBuildingStorey/FUNDAMENT | IfcWall/WND-EXT-390-MWZ-MS-10-60-25-290-15</p>
        <table>
          <tr><th>Objects</th><td>1 / 1</td></tr><tr><th>Vertices</th><td>100 / 100</td></tr><tr><th>Edges</th><td>300 / 300</td></tr><tr><th>Faces</th><td>200 / 200</td></tr><tr><th>Triangles</th><td>200 / 200</td></tr>
        </table>
      </div>
      <div class="navcol">
        <svg class="gizmo" viewBox="0 0 120 120">
          <circle cx="60" cy="101" r="11" fill="#8c9bb0" stroke="#4878b6" stroke-width="2"/>
          <path stroke="#7aa13f" stroke-width="3" d="M60 60L35 40"/><path stroke="#b64b57" stroke-width="3" d="M60 60l41-13"/><path stroke="#4a84d8" stroke-width="3" d="M60 60V18"/>
          <circle cx="19" cy="72" r="11" fill="#6f4450" stroke="#d24a5c" stroke-width="2"/><circle cx="85" cy="79" r="11" fill="#5d6a3b" stroke="#8fc03c" stroke-width="2"/>
          <circle cx="35" cy="40" r="12" fill="#75963a"/><circle cx="101" cy="47" r="12" fill="#af4551"/><circle cx="60" cy="18" r="12" fill="#4a84d8"/>
          <text x="60" y="24">Z</text><text x="35" y="46">Y</text><text x="101" y="53">X</text>
        </svg>
        <button aria-label="Zoom"><svg class="i24"><use href="#zoomi"/></svg></button><button aria-label="Pan"><svg class="i24"><use href="#hand"/></svg></button><button aria-label="Camera view"><svg class="i24"><use href="#camv"/></svg></button><button aria-label="Perspective"><svg class="i24"><use href="#persp"/></svg></button>
      </div>
      <aside class="npanel">
        <div class="np"><h3><svg class="i20"><use href="#down"/></svg>Active Tool<i class="grip"></i></h3>
          <div class="atool"><span class="selbox"><svg class="i22"><use href="#cursor"/></svg></span>Select Box</div>
          <div class="modes big"><button class="on" aria-label="Set"><svg class="i22"><use href="#s1"/></svg></button><button aria-label="Extend"><svg class="i22"><use href="#s2"/></svg></button><button aria-label="Subtract"><svg class="i22"><use href="#s3"/></svg></button><button aria-label="Invert"><svg class="i22"><use href="#s4"/></svg></button><button aria-label="Intersect"><svg class="i22"><use href="#s5"/></svg></button></div>
        </div>
        <div class="np"><h3><svg class="i20"><use href="#down"/></svg>Options<i class="grip"></i></h3>
          <h4><svg class="i20"><use href="#down"/></svg>Transform</h4>
          <fieldset><legend>Affect Only</legend><label><input type="checkbox">Origins</label><label><input type="checkbox">Locations</label><label><input type="checkbox">Parents</label></fieldset>
        </div>
        <div class="np"><h3><svg class="i20"><use href="#right"/></svg>Workspace<i class="grip"></i></h3></div>
      </aside>
      <nav class="vtabs"><button>Item</button><button class="on">Tool</button><button>View</button><button>Animation</button><button>Mat List</button><button>Create</button><button>IKEA</button><button>Tissue</button><button>Modifier List</button><button>Speckle</button><button>BagaPie</button><button>Misc</button><button>Edit</button><button>Photographer</button></nav>
    </div>
  </section>

  <section class="props">
    <nav class="ptabs">
      <div><button aria-label="Tool"><svg class="i22"><use href="#tool"/></svg></button></div>
      <div><button aria-label="Render"><svg class="i22"><use href="#render"/></svg></button><button aria-label="Output"><svg class="i22"><use href="#output"/></svg></button><button aria-label="View layer"><svg class="i22"><use href="#imgs"/></svg></button><button class="on" aria-label="Scene"><svg class="i22"><use href="#scene"/></svg></button><button class="red" aria-label="World"><svg class="i22"><use href="#world"/></svg></button></div>
      <div><button class="wh" aria-label="Collection"><svg class="i22"><use href="#collo"/></svg></button></div>
      <div><button class="or" aria-label="Object"><svg class="i22"><use href="#obj"/></svg></button><button class="bl" aria-label="Modifiers"><svg class="i22"><use href="#wrench"/></svg></button><button class="bl" aria-label="Particles"><svg class="i22"><use href="#parts"/></svg></button><button class="bl" aria-label="Physics"><svg class="i22"><use href="#phys"/></svg></button><button class="bl" aria-label="Constraints"><svg class="i22"><use href="#cons"/></svg></button><button class="gn" aria-label="Data"><svg class="i22"><use href="#meshdata"/></svg></button><button class="red" aria-label="Material"><svg class="i22"><use href="#matr"/></svg></button></div>
      <svg class="i12 end"><use href="#chev"/></svg>
    </nav>
    <div class="pmain">
      <div class="phead"><svg class="i24"><use href="#scene"/></svg>PROJECT<button class="notch" aria-label="Expand"><svg class="i12"><use href="#chev"/></svg></button><button class="ppin" aria-label="Pin"><svg class="i22"><use href="#pin"/></svg></button></div>
      <nav class="ptop"><button aria-label="Project"><svg class="i24"><use href="#knot"/></svg></button><button class="on" aria-label="Object"><svg class="i22"><use href="#cube"/></svg></button><button aria-label="Geometry"><svg class="i22"><use href="#matr"/></svg></button><button aria-label="Drawings"><svg class="i22"><use href="#docs"/></svg></button><button aria-label="Services"><svg class="i22"><use href="#db"/></svg></button><button aria-label="Structure"><svg class="i22"><use href="#nodes"/></svg></button><button aria-label="Scheduling"><svg class="i22"><use href="#align"/></svg></button><button aria-label="Facility"><svg class="i22"><use href="#boxes"/></svg></button><button aria-label="People"><svg class="i22"><use href="#people"/></svg></button><button aria-label="Quality"><svg class="i22"><use href="#arrows"/></svg></button></nav>
      <span class="dd fld main"><svg class="i22"><use href="#cube"/></svg><select aria-label="Tab"><option>Object Information</option></select><svg class="i12"><use href="#chev"/></svg></span>
      <div class="panel">
        <h3><svg class="i20"><use href="#down"/></svg>Object Metadata<i class="grip"></i></h3>
        <div class="body first"><div class="row"><span>IfcWall[WND-EXT-390-MWZ-MS-10-60-25-290-15]</span><span class="grp"><button aria-label="Select"><svg class="i22"><use href="#cursor"/></svg></button><button aria-label="Unlink"><svg class="i22"><use href="#unlink"/></svg></button><button aria-label="Edit"><svg class="i22"><use href="#pencil"/></svg></button></span></div></div>
        <h4><svg class="i20"><use href="#down"/></svg>Attributes</h4>
        <div class="body"><button class="act"><svg class="i22"><use href="#pencil"/></svg><span>Edit</span></button>
          <table class="attrs"><tr><th>GlobalId</th><td>1ozHTZOC99GxvHzci1JDN_</td></tr><tr><th>Name</th><td>WND-EXT-390-MWZ-MS-10-60-25-290-15</td></tr><tr><th>ObjectType</th><td>WND-EXT-390-MWZ-MS-10-60-25-290-15</td></tr></table></div>
        <h4><svg class="i20"><use href="#down"/></svg>Type</h4>
        <div class="body"><div class="row"><span>IfcWallType/WND-EXT-390-MWZ-MS-10-60-25-290-15</span><span class="grp"><button aria-label="Select similar"><svg class="i22"><use href="#obj"/></svg></button><button aria-label="Select"><svg class="i22"><use href="#cursor"/></svg></button><button aria-label="Edit"><svg class="i22"><use href="#pencil"/></svg></button><button aria-label="Remove"><svg class="i22"><use href="#x"/></svg></button></span></div></div>
        <h4><svg class="i20"><use href="#down"/></svg>Spatial Container</h4>
        <div class="body"><div class="row"><span>IfcBuildingStorey/ERDGESCHOSS</span><span class="grp"><button aria-label="Select similar"><svg class="i22"><use href="#obj"/></svg></button><button aria-label="Select"><svg class="i22"><use href="#cursor"/></svg></button><button aria-label="Edit"><svg class="i22"><use href="#pencil"/></svg></button><button aria-label="Remove"><svg class="i22"><use href="#x"/></svg></button></span></div><div class="row"><span>No References Found</span></div></div>
        <h4><svg class="i20"><use href="#down"/></svg>Aggregates</h4>
        <div class="body tight"><div class="row"><span>Aggregate Decorator</span><span class="grp"><button class="mut" aria-label="Toggle decorator"><svg class="i20"><use href="#eyeoff"/></svg></button></span></div><div class="row"><span class="ind"><svg class="i20"><use href="#triup"/></svg>No Whole Relationship Found</span><span class="grp"><button aria-label="Edit"><svg class="i22"><use href="#pencil"/></svg></button><button aria-label="Add"><svg class="i22"><use href="#plus"/></svg></button></span></div><div class="row"><span class="ind"><svg class="i20"><use href="#tridn"/></svg>No Parts</span></div>
          <h5><svg class="i20"><use href="#right"/></svg>Linked Aggregates</h5></div>
        <h4><svg class="i20"><use href="#down"/></svg>Nest</h4>
        <div class="body"><div class="row"><span class="ind"><svg class="i20"><use href="#triup"/></svg>No Host</span><span class="grp"><button aria-label="Edit"><svg class="i22"><use href="#pencil"/></svg></button></span></div><div class="row"><span class="ind"><svg class="i20"><use href="#tridn"/></svg>No Components</span></div></div>
        <h4><svg class="i20"><use href="#down"/></svg>Property Sets<label class="psearch"><svg class="i22"><use href="#search"/></svg><input placeholder="Search" aria-label="Search property sets"></label></h4>
        <div class="body"><div class="fused"><span class="dd fld"><select aria-label="Property set"><option>Custom Pset</option></select><svg class="i12"><use href="#chev"/></svg></span><span class="grp"><button aria-label="Search"><svg class="i22"><use href="#search"/></svg></button><button aria-label="Add"><svg class="i22"><use href="#plus"/></svg></button></span></div>
          <div class="row"><span>Occurrence Properties:</span></div>
          <div class="box"><div class="bhead"><svg class="i20"><use href="#tridn"/></svg><svg class="i22"><use href="#pset"/></svg><span>Pset_WallCommon</span><span class="grp"><button aria-label="Edit"><svg class="i22"><use href="#pencil"/></svg></button></span><svg class="i22 bk"><use href="#books"/></svg><span class="grp"><button aria-label="Inspect"><svg class="i22"><use href="#lamp"/></svg></button><button aria-label="Remove"><svg class="i22"><use href="#x"/></svg></button></span></div>
            <table><tr><th>Combustible</th><td>False</td></tr><tr><th>Compartmentation</th><td>False</td></tr><tr><th>IsExternal</th><td>True</td></tr><tr><th>LoadBearing</th><td>True</td></tr><tr><th>Reference</th><td>WND-EXT-390-MWZ-MS-10-60-25-290-…</td></tr><tr><th>ThermalTransmittance</th><td>0.5</td></tr></table></div></div>
        <h4><svg class="i20"><use href="#down"/></svg>Quantity Sets<label class="psearch"><svg class="i22"><use href="#search"/></svg><input placeholder="Search" aria-label="Search quantity sets"></label></h4>
        <div class="body"><div class="fused"><span class="dd fld"><select aria-label="Quantity set"><option>Custom Qto</option></select><svg class="i12"><use href="#chev"/></svg></span><span class="grp"><button aria-label="Add"><svg class="i22"><use href="#plus"/></svg></button></span></div>
          <div class="fused"><span class="dd fld"><select aria-label="Calculator"><option>IFC4 Base Quantities - IfcOpenShell</option></select><svg class="i12"><use href="#chev"/></svg></span><span class="grp"><button class="mut" aria-label="Mode"><svg class="i22"><use href="#ringo"/></svg></button></span></div>
          <button class="act">Perform Quantity Take-off</button></div>
        <h4><svg class="i20"><use href="#right"/></svg>Classification References</h4>
      </div>
      <div class="panel misc"><h3><svg class="i20"><use href="#right"/></svg>Misc.<i class="grip"></i></h3></div>
    </div>
  </section>
</main>

<div class="tip" role="tooltip"><p>Display Filter</p><p>Suchfilter-Zeichenkette.</p><pre>Python: SpaceOutliner.filter_text
bpy.data.screens["Layout.001"].areas[2].spaces[0].filter_text</pre></div>
<script src="script.js"></script>
</body>
</html>
```
FILE: styles.css
```css
* { box-sizing: border-box; }
body { margin: 0; height: 100vh; overflow: hidden; display: flex; flex-direction: column; background: #202020; color: #e4e4e4; font: 16px/20px Inter, "Liberation Sans", sans-serif; font-feature-settings: "tnum", "cv08", "cv05"; text-shadow: 0 2px 2px rgba(0,0,0,.35); }
button, input, select { font: inherit; font-feature-settings: inherit; color: inherit; text-shadow: inherit; background: none; border: 0; padding: 0; margin: 0; outline: 0; }
button { display: flex; align-items: center; justify-content: center; }
select { appearance: none; }
input::placeholder { color: #7c7c7c; opacity: 1; }
h3, h4, h5, p, ul, pre, fieldset { margin: 0; padding: 0; border: 0; font-weight: 400; font-size: 16px; }
svg { display: block; flex: none; }
.defs { position: absolute; width: 0; height: 0; }
.ln { fill: none; stroke: currentColor; }
.i12 { width: 12px; height: 12px; }
.i20 { width: 20px; height: 20px; }
.i22 { width: 22px; height: 22px; }
.i24 { width: 24px; height: 24px; }

/* top bar */
.topbar { height: 45px; flex: none; display: flex; align-items: center; padding: 6px 7px 0 7px; }
.logo { color: #e4e4e4; }
.logo svg { width: 28px; height: 28px; }
.menus { display: flex; }
.menus button { padding: 0 11px; height: 30px; }
.sep { width: 1px; height: 30px; margin: 0 12px 0 9px; background: #3c3c3c; }
.wtabs { display: flex; gap: 3px; color: #9b9b9b; }
.wtabs button { height: 33px; padding: 0 13px; border-radius: 6px; background: #262626; }
.wtabs .on { background: #3a3a3a; color: #fff; }
.wtabs .add { padding: 0; width: 28px; }
.idgroup { display: flex; gap: 7px; margin-left: auto; }
.idb { display: flex; gap: 1px; height: 30px; border: 1px solid #484848; border-radius: 6px; background: #484848; overflow: hidden; --hole: #2c2c2c; }
.idb > * { background: #262626; }
.idb .drop { width: 46px; height: 28px; gap: 5px; border: 0; border-radius: 0; background: #2c2c2c; }
.idb .scn { width: 112px; padding-left: 12px; }
.idb .vly { width: 118px; padding-left: 12px; }
.idb .pinb { width: 36px; margin-left: -1px; color: #8a8a8a; }
.idb .lt { width: 29px; background: #555; }
.idb .off { width: 28px; color: #4a4a4a; background: #2a2a2a; }

.drop { width: 47px; height: 30px; gap: 3px; border: 1px solid #484848; border-radius: 6px; background: #2e2e2e; }
.drop .i12, .dd .i12 { flex: none; }

.areas { flex: 1; min-height: 0; display: grid; grid-template-columns: 692px minmax(0, 1fr) 875px; gap: 6px; padding: 0 3px; }

/* outliner */
.outliner { position: relative; border: 1px solid #474747; border-bottom: 0; border-radius: 8px 8px 0 0; background: #303030; overflow: hidden; }
.ohead { position: relative; z-index: 1; display: flex; align-items: center; height: 38px; padding: 0 12px 2px 11px; gap: 8px; background: #303030; }
.osearch { display: flex; align-items: center; width: 171px; height: 30px; margin: 0 auto 0 124px; padding-left: 5px; border: 1px solid #464646; border-radius: 6px; background: #2a2a2a; }
.osearch input { width: 120px; padding-left: 10px; }
.newc { width: 29px; height: 30px; border-radius: 6px; background: #545454; }
.rows { list-style: none; margin-top: -4px; }
.rows li { display: flex; align-items: center; height: 30px; padding: 0 12px 0 89px; background: #303030; color: #8b8b8b; }
.rows li:nth-child(odd) { background: #333333; }
.rows li > * { flex: none; }
.g, .tw, .ti { width: 30px; height: 30px; display: flex; align-items: center; justify-content: center; }
.g { background: linear-gradient(#6c6c6c, #6c6c6c) 14px 0 / 1px 100% no-repeat; }
.g.short { background-size: 1px 14px; background-position: 14px 8px; }
.rows .ti svg, .rows .tb svg { width: 20px; height: 20px; }
.rows .nm { margin: 0 30px 0 5px; overflow: hidden; white-space: nowrap; min-width: 0; flex: 1; display: flex; align-items: center; }
.rows .coll .nm { margin-right: 0; }
.nm .ex { margin-left: 35px; width: 22px; height: 20px; }
.nm .ex + .ex { margin-left: 8px; }
.nm small { font-size: 13px; margin: 10px 0 0 -10px; color: #ddd; }
.rows .tb { width: 30px; height: 30px; color: #ededed; }
.rows .tb.faint { color: #5e5e5e; }
.tb .ck { appearance: none; width: 16px; height: 16px; border-radius: 2px; background: #e8e8e8; display: grid; place-items: center; }
.tb .ck::after { content: ""; width: 10px; height: 5px; margin-top: -4px; border: solid #222; border-width: 0 0 3px 3px; transform: rotate(-48deg); }
.rows .coll { color: #dedede; }
.rows .coll.mute { color: #8b8b8b; }
.emp { color: #8a6547; }
.coll .emp { color: inherit; }
.rows li.sel { height: 28px; margin: 1px 3px; padding: 0 8px 0 85px; border: 1px solid #7189c2; border-radius: 4px; background: #415785; color: #f2b259; }
.sel .tw { color: #fff; }
.sel .ti { height: 26px; border-radius: 8px; background: #7d8199; }
.scroll { position: absolute; right: 2px; top: 760px; height: 899px; width: 5px; border-radius: 3px; background: #454545; }

/* tooltip */
.tip { position: absolute; left: 297px; top: 93px; width: 660px; height: 115px; padding: 11px 18px; border-radius: 6px; background: #252525; box-shadow: 0 3px 10px rgba(0,0,0,.3); color: #e6e6e6; z-index: 5; }
.tip p { height: 22px; margin-bottom: 4px; line-height: 22px; }
.tip pre { font: 17px/19px "DejaVu Sans Mono", monospace; color: #858585; margin-top: 4px; }

/* viewport */
.viewport { position: relative; border-radius: 8px 8px 0 0; overflow: hidden; display: flex; flex-direction: column; }
.scene { position: absolute; inset: 0; width: 100%; height: 100%; }
.vhead, .vsub, .vbody { position: relative; }
.vhead { display: flex; justify-content: space-between; height: 42px; padding: 4px 12px 8px 13px; background: #727272; border-top: 1px solid #868686; }
.cl { display: flex; gap: 8px; }
.cl .menus { margin-left: -2px; }
.menus .gis { gap: 14px; padding-left: 6px; }
.dk { background: #2d2d2d; border: 1px solid #484848; border-radius: 6px; height: 30px; }
.dd { display: flex; align-items: center; padding: 0 5px; gap: 10px; }
.dd select { flex: 1; }
.snug { gap: 7px; }
.join { display: flex; gap: 1px; overflow: hidden; border-radius: 6px; }
.join > button { width: 28px; height: 28px; }
.join .on, .modes .on { background: #4d73b3; color: #fff; }
.join .gr { background: #545454; color: #b4b4b4; }
.join .dd { padding: 0 4px 0 12px; gap: 15px; }
.join .wide { width: 46px; gap: 6px; color: #888; }
.join.dim { background: #585858; }
.join.dim .gr { background: #616161; color: #eee; }
.xr { height: 30px; background: #5a6d90; align-items: center; color: #7e94bd; }
.vsub { display: flex; justify-content: space-between; height: 36px; }
.vleft { width: 166px; background: #727272; padding: 2px 0 0 13px; border-radius: 0 0 6px 0; }
.vright { width: 118px; background: #727272; padding: 2px 12px 0; border-radius: 0 0 0 6px; }
.opt { width: 94px; justify-content: center; gap: 11px; padding: 0 4px 0 12px; }
.modes { display: flex; gap: 1px; width: max-content; border-radius: 5px; overflow: hidden; }
.modes button { width: 28px; height: 28px; background: #5c5c5c; color: #c4c4c4; }
.modes .on { background: #4d73b3; color: #fff; }
.vbody { display: flex; align-items: flex-start; flex: 1; padding: 0 2px 0 11px; }
.tools { padding-top: 11px; width: 59px; }
.tg { margin-bottom: 8px; border: 1px solid #454545; border-radius: 6px; overflow: hidden; background: #303030; }
.tg.last { margin-bottom: 15px; }
.tg button { position: relative; width: 57px; height: 50px; color: #e6e6e6; }
.tg button + button { height: 52px; border-top: 1px solid #454545; }
.tg svg { width: 40px; height: 40px; }
.more::after { content: ""; position: absolute; right: 4px; bottom: 4px; border: 3px solid transparent; border-right-color: #999; border-bottom-color: #999; }
.stats { margin: 37px 0 0 26px; flex: 1; color: #fff; text-shadow: 1px 0 #555, -1px 0 #555, 0 1px #555, 0 -1px #555, 0 0 2px #555; }
.stats p { line-height: 26px; height: 26px; white-space: nowrap; }
.stats table { margin-top: 15px; border-collapse: collapse; }
.stats th, .stats td { padding: 0; height: 26px; text-align: left; font-weight: 400; white-space: nowrap; }
.stats th { width: 83px; }
.navcol { width: 122px; margin: 15px 25px 0 0; display: flex; flex-direction: column; align-items: flex-end; gap: 4px; }
.gizmo { width: 120px; height: 120px; align-self: flex-start; margin-bottom: -4px; }
.gizmo text { font-size: 17px; font-weight: 600; text-anchor: middle; fill: #20262e; text-shadow: none; }
.navcol button { width: 41px; height: 41px; border-radius: 50%; background: rgba(104,113,128,.7); color: #e8e8e8; }
.npanel { width: 409px; margin-top: 2px; display: flex; flex-direction: column; gap: 3px; }
.np { border-radius: 6px; background: #464646; border: 1px solid #4f4f4f; overflow: hidden; box-shadow: 0 2px 4px rgba(0,0,0,.3); }
.np h3 { display: flex; align-items: center; height: 37px; padding: 0 13px 0 8px; gap: 3px; }
.np h4 { display: flex; align-items: center; height: 36px; padding-left: 28px; gap: 4px; }
.grip { width: 18px; height: 9px; margin-left: auto; background: radial-gradient(circle, #8a8a8a 1px, transparent 1px) 0 0 / 5px 5px; }
.atool { display: flex; align-items: center; gap: 12px; height: 53px; padding-left: 20px; }
.selbox { width: 33px; height: 33px; border: 2px dashed #e6a63c; display: grid; place-items: center; padding-left: 3px; }
.big { margin: 4px 0 12px 12px; gap: 0; }
.np fieldset { display: grid; gap: 11px; padding: 17px 0 16px 173px; background: #3e3e3e; position: relative; }
.np legend { position: absolute; left: 0; top: 17px; width: 159px; text-align: right; line-height: 19px; padding: 0; }
.np label { display: flex; align-items: center; gap: 6px; height: 19px; }
.np input { appearance: none; width: 19px; height: 19px; border-radius: 4px; background: #5a5a5a; }
.vtabs { display: flex; flex-direction: column; gap: 6px; margin: 6px 0 0 12px; }
.vtabs button { writing-mode: vertical-rl; width: 28px; padding: 10px 0; border-radius: 7px; background: #242424; border: 1px solid #303030; color: #a2a2a2; }
.vtabs .on { background: #343434; color: #fff; }

/* properties */
.props { display: flex; border-radius: 8px 8px 0 0; overflow: hidden; border: 1px solid #474747; border-width: 1px 1px 0; background: #393939; }
.ptabs { width: 41px; padding-top: 10px; background: #222; color: #b8b8b8; --hole: #3a3a3a; }
.ptabs div { margin-bottom: 11px; border-radius: 6px 0 0 6px; background: #292929; }
.ptabs button { width: 39px; height: 42px; margin-left: 2px; }
.ptabs .on { background: #393939; border-radius: 6px 0 0 6px; color: #ddd; }
.ptabs .end { margin: 24px auto 0; color: #666; }
.ptabs .red { color: #b0616a; }
.ptabs .or { color: #c98f5b; }
.ptabs .bl { color: #6f8ed2; }
.ptabs .gn { color: #4db58c; }
.ptabs .wh { color: #ddd; }
.pmain { flex: 1; min-width: 0; padding: 0 12px; display: flex; flex-direction: column; --hole: #393939; }
.phead { display: flex; align-items: center; gap: 12px; height: 51px; padding: 0 2px; }
.notch { align-self: flex-start; width: 27px; height: 14px; margin-left: auto; border-radius: 0 0 4px 4px; background: #2f2f2f; color: #999; }
.ppin { margin-left: -18px; color: #999; margin-right: 2px; }
.ptop { display: flex; justify-content: center; gap: 14px; height: 62px; padding-top: 13px; }
.ptop button { position: relative; width: 28px; height: 28px; border-radius: 6px; }
.ptop .on { background: #585858; }
.ptop .on::after { content: ""; position: absolute; left: 0; right: 0; top: 38px; height: 3px; background: #5a78b3; }
.fld { height: 28px; background: #303030; border: 1px solid #484848; border-radius: 5px; padding: 0 4px 0 11px; }
.main { height: 30px; margin-bottom: 15px; padding-left: 5px; }
.panel { border: 1px solid #525252; border-radius: 6px; background: #464646; margin-bottom: 4px; }
.panel h3, .panel h4, .panel h5 { display: flex; align-items: center; gap: 4px; }
.panel h3 { height: 36px; padding: 0 13px 0 8px; }
.panel h4 { height: 40px; padding: 4px 0 0 28px; }
.panel h5 { height: 38px; padding: 8px 0 0 18px; }
.misc h3 { height: 35px; }
.body { margin: 0 2px; padding: 13px 9px 9px; display: flex; flex-direction: column; gap: 9px; background: #3f3f3f; border-radius: 0 0 5px 5px; }
.body.first { background: #393939; }
.body.tight { padding-bottom: 0; }
.row { display: flex; align-items: center; justify-content: space-between; height: 28px; white-space: nowrap; }
.ind { display: flex; align-items: center; gap: 14px; margin-left: 4px; }
.grp { display: flex; gap: 1px; height: 28px; border-radius: 5px; overflow: hidden; }
.grp button { width: 29px; height: 28px; background: #595959; }
.grp .mut { color: #aaa; }
.act { height: 28px; border-radius: 5px; background: #595959; width: 100%; }
.act svg { margin-left: 4px; }
.act span { flex: 1; text-align: center; }
table { border-collapse: collapse; }
.body table { width: 100%; table-layout: fixed; }
.body th, .body td { padding: 0; font-weight: 400; text-align: left; height: 37px; white-space: nowrap; }
.body td { text-align: center; }
.body .attrs { margin: -4px 0; }
.psearch { display: flex; align-items: center; gap: 10px; width: 375px; height: 28px; margin: -2px 2px 0 auto; padding-left: 5px; border-radius: 5px; background: #262626; }
.psearch input::placeholder { color: #666; }
.fused { display: flex; gap: 1px; }
.fused .fld { flex: 1; border-radius: 5px 0 0 5px; border-right: 0; }
.fused .grp { border-radius: 0 5px 5px 0; }
.box { border: 1px solid #464646; border-radius: 5px; background: #323232; padding: 6px 6px 2px; }
.bhead { display: flex; align-items: center; height: 28px; margin-bottom: 8px; padding-left: 3px; }
.bhead > span:first-of-type { flex: 1; padding-left: 12px; }
.bhead .i20 + .i22 { margin-left: 10px; }
.bk { margin: 0 5px; }
.box th, .box td { height: 35px; }
```
FILE: script.js
```js
const svg = (id, cls = "") => `<svg class="${cls}"><use href="#${id}"/></svg>`;
const wall = "IfcWall/WND-", rows = [];
const add = (o) => rows.push(o);
const many = (n, name) => { for (let i = 0; i < n; i++) add({ name, kind: "mesh" }); };

many(1, wall + "EXT-350-MWZ-MS-10-60-");
many(3, "IfcWall/WN");
many(1, wall + "EXT-350-MWZ-MS-10-60-");
many(1, wall + "EXT-350-STB-MS-10-60-2");
many(1, wall + "EXT-360-MWZ-MS-10-60-");
add({ name: wall + "EXT-390-MWZ-MS-10-60-", kind: "mesh", sel: true });
many(7, wall + "INT-170-MWZ-MS-15-115");
many(1, wall + "INT-220-MWZ-MS-15-190");
many(5, wall + "STR-150-STB-ES-150-WEI");
many(1, wall + "STR-220-STB-MS-70-150-");
many(4, wall + "STR-270-MWZ-MS-15-240");
for (let i = 6; i < 16; i++) add({ name: "IfcWindow/W-01.0" + String(i).padStart(2, "0"), kind: "mesh", data: true });
add({ name: "IfcBuildingStorey/DACHGESCHOSS", kind: "coll", closed: true, count: 21 });
add({ name: "IfcSite/Default Site", kind: "coll" });
add({ name: "IfcSite/Default Site", kind: "empty", shown: true });
add({ name: "IfcBuilding/Default Building", kind: "coll" });
add({ name: "IfcBuilding/Default Building", kind: "empty", shown: true });
add({ name: "IfcTypeProduct", kind: "coll", mute: true });
["DoorType/D-01", "DoorType/D-01.001", "DoorType/TUE-EXT-390-SLIDE-HOLZ-V", "DoorType/TUE-INT-885-STD-1OL-HEL",
 "DoorType/TUE-INT-885-STD-HELLGRAU", "DoorType/TUE-INT-885-STD-HELLGRAU", "DoorType/TUE-INT-1260-1SL-1OL-HE",
 "SlabType/BDN_EXT_130_KLK_MS_50_70_", "SlabType/BDN_INT_20_KRM_MS_10_10_F", "SlabType/BDN_INT_30_TRV_ES_30_TRAV",
 "SlabType/BDN_INT_85_TEP_MS_10_45_3", "SlabType/BDN_INT_85_TRV_MS_30_55_T", "SlabType/BDN_INT_90_TEP_MS_10_55_3",
 ""].forEach((n) => add({ name: n && "Ifc" + n, kind: "empty" }));

const tb = (id, faint) => `<button class="tb${faint ? " faint" : ""}" aria-label="${id}">${svg(id)}</button>`;
document.getElementById("rows").innerHTML = rows.map((r) => {
  const coll = r.kind === "coll", mesh = r.kind === "mesh";
  const dim = r.mute || (r.kind === "empty" && !r.shown);
  const twist = mesh || r.closed ? "right" : coll ? "down" : "";
  const eye = r.sel || (!mesh && !r.mute) ? "eye" : "eyeoff";
  return `<li class="${coll ? "coll" : ""}${r.mute ? " mute" : ""}${r.sel ? " sel" : ""}"><span class="g"></span>` +
    (coll ? "" : `<span class="g${r.shown ? " short" : ""}"></span>`) +
    `<span class="tw">${twist ? svg(twist, "i20") : ""}</span>` +
    `<span class="ti emp">${svg(r.sel ? "meshon" : r.kind)}</span>` +
    `<span class="nm">${r.name}` +
    (r.data ? `<svg class="ex" color="#3f8069"><use href="#meshdata"/></svg>` : "") +
    (r.count ? `<svg class="ex" color="#bd8150"><use href="#empty"/></svg><svg class="ex"><use href="#meshon"/></svg><small>${r.count}</small>` : "") +
    `</span>` + (coll ? `<span class="tb ti"><input class="ck" type="checkbox" checked aria-label="${r.name}"></span>` : "") +
    tb("cursor", dim) + tb(eye, dim) + tb("cam") + `</li>`;
}).join("");

// Ground grid: two families of lines, each running to its own vanishing point on the horizon.
const H = 137, BASE = 1736;
let d = "";
for (let k = -60; k <= 60; k++) d += `M737 ${H}L${1919 + 561 * k} ${BASE}`;
for (let k = -60; k <= 4; k++) d += `M5125 ${H}L${966 + 893 * k} ${BASE}`;
document.getElementById("floor").innerHTML = `<path d="${d}"/>`;
```
